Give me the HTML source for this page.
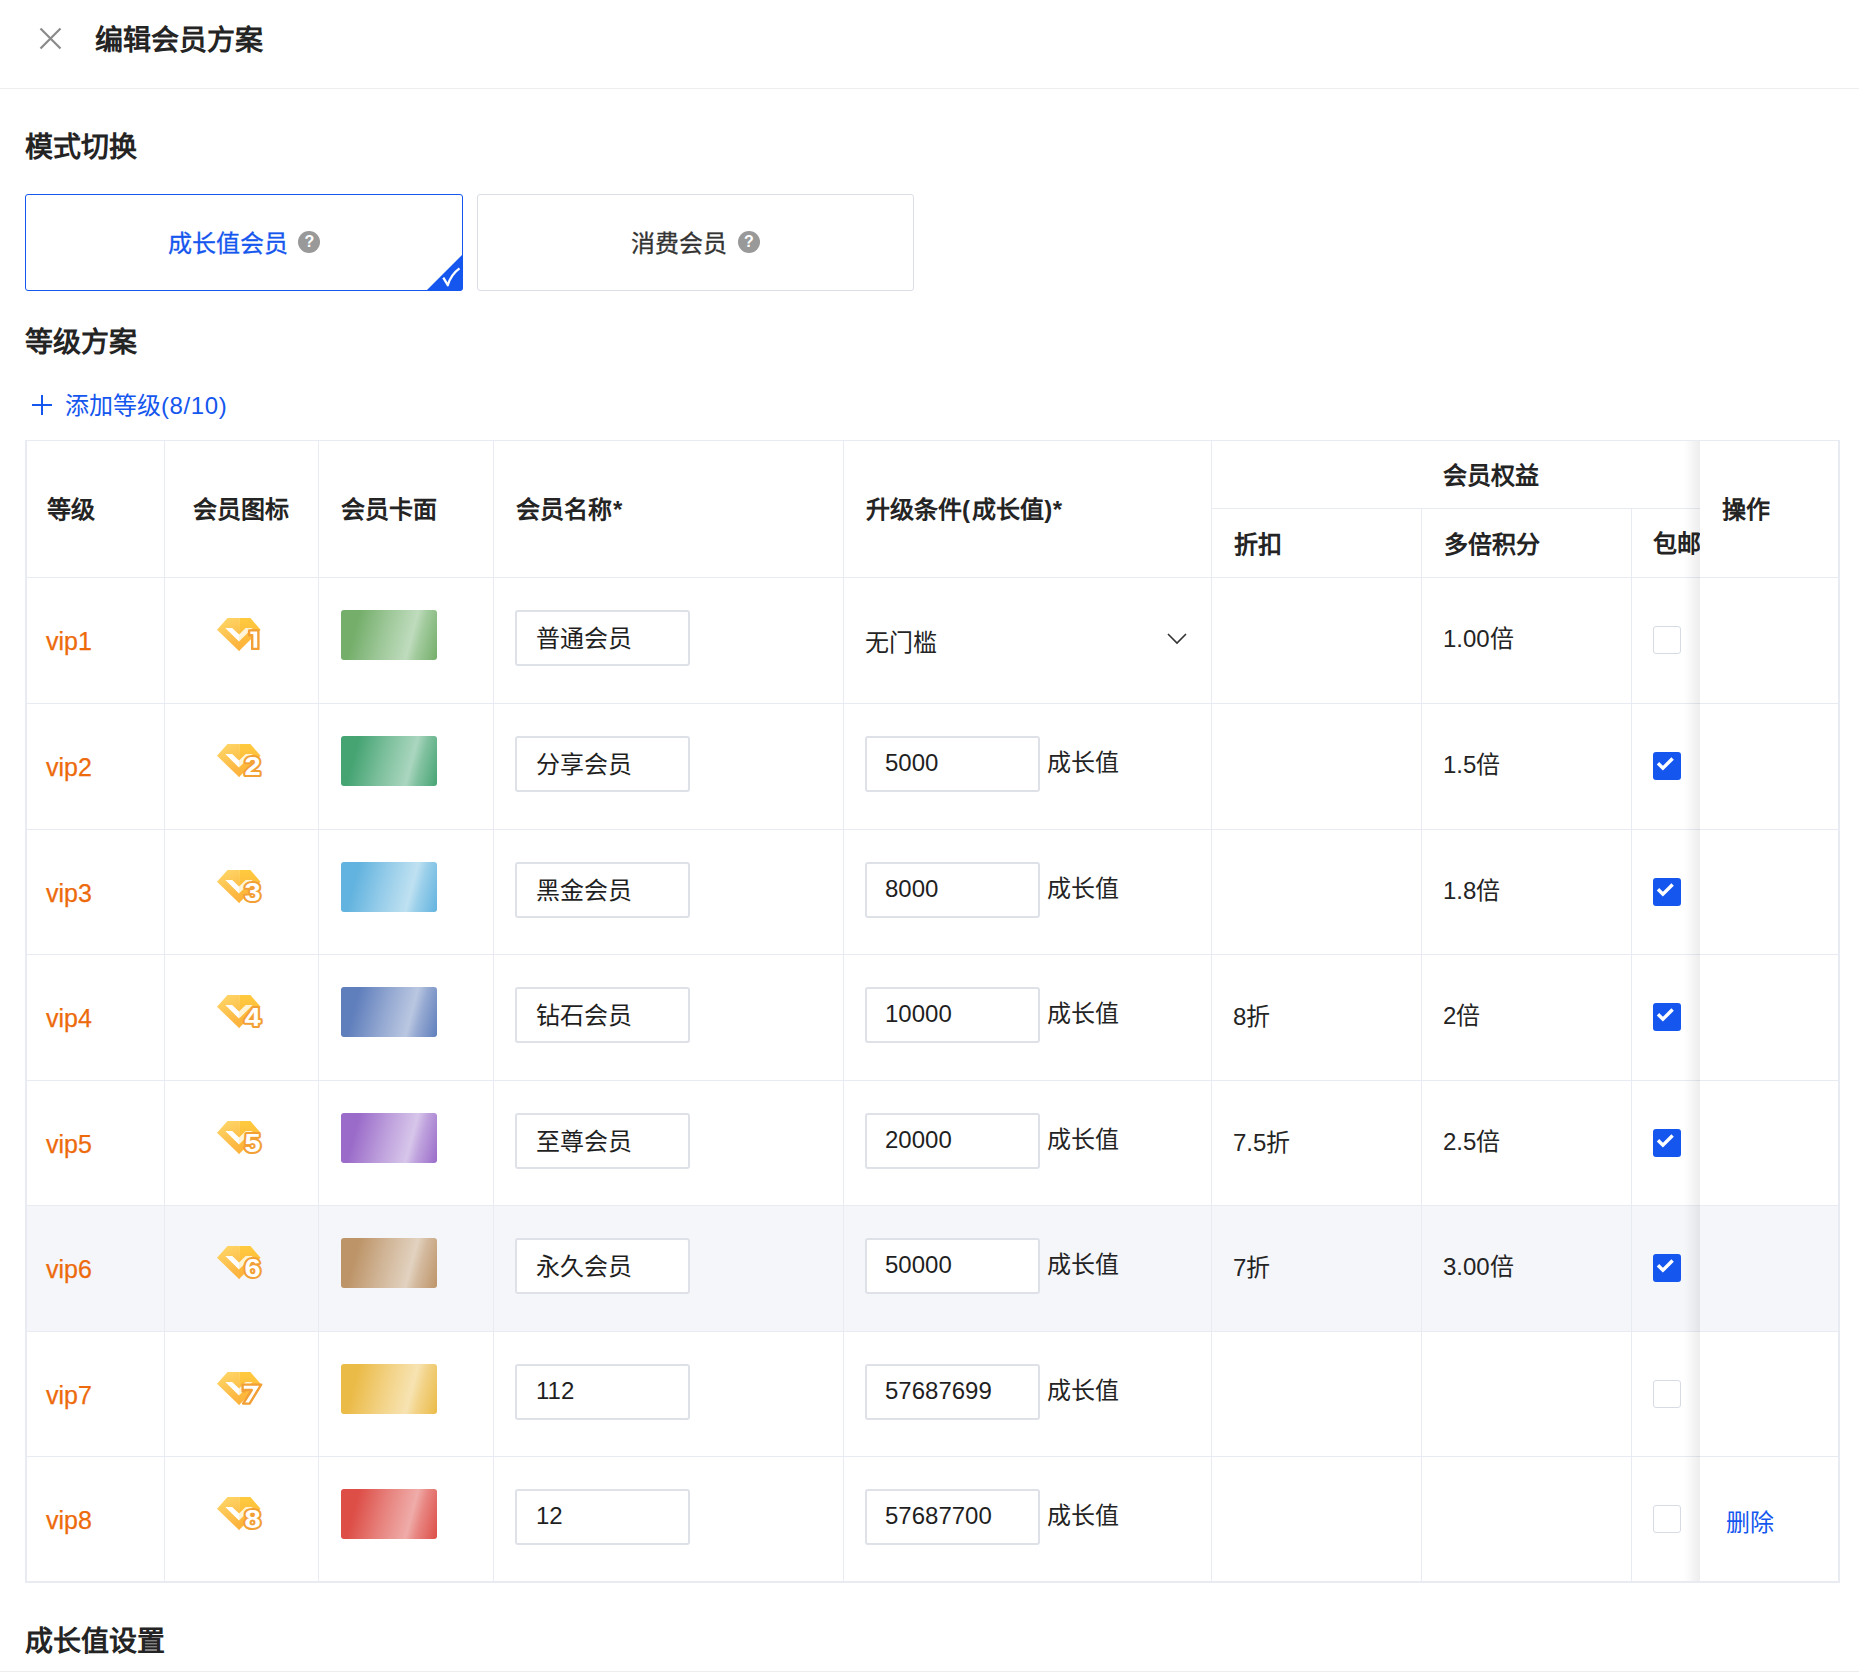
<!DOCTYPE html>
<html lang="zh-CN">
<head>
<meta charset="utf-8">
<style>
*{box-sizing:border-box;margin:0;padding:0}
html,body{width:1859px;height:1677px;overflow:hidden;background:#fff}
body{position:relative;font-family:"Liberation Sans",sans-serif;color:#323233}
.a{position:absolute;white-space:nowrap}
.h{font-size:28px;font-weight:bold;line-height:40px;color:#242424}
.th{font-size:24px;font-weight:bold;line-height:34px;color:#242424}
.td{font-size:24px;line-height:34px;color:#242424}
.vl{position:absolute;width:1px;background:#e8ebf2}
.hl{position:absolute;height:1px;background:#e8ebf2}
.card{position:absolute;top:194px;height:97px;border:1px solid #dcdee6;border-radius:3px;background:#fff}
.q{display:inline-block;width:22px;height:22px;border-radius:50%;background:#999;color:#fff;font-size:16px;font-weight:bold;line-height:22px;text-align:center;vertical-align:middle;margin-left:4px;position:relative;top:-4px;-webkit-text-stroke:0}
.inp{position:absolute;width:175px;height:56px;border:2px solid #dfe1e8;border-radius:3px;background:#fff;font-size:24px;line-height:52px;padding-left:19px;color:#1f1f1f}
.cb{position:absolute;left:1653px;width:28px;height:28px;border-radius:3px}
.cb0{border:1px solid #d6dbe4;background:#fff}
.cb1{background:#1557ee}
.vip{position:absolute;left:46px;font-size:25px;line-height:34px;color:#ed6a0c;-webkit-text-stroke:0.25px #ed6a0c}
.face{position:absolute;left:341px;width:96px;height:50px;border-radius:3px}
</style>
</head>
<body>
<!-- header -->
<svg class="a" style="left:39px;top:27px" width="23" height="23" viewBox="0 0 23 23"><path d="M1.5 1.5L21.5 21.5M21.5 1.5L1.5 21.5" stroke="#8a8a8a" stroke-width="2.2" fill="none"/></svg>
<div class="a h" style="left:95px;top:21px">编辑会员方案</div>
<div class="hl" style="left:0;top:88px;width:1859px;background:#eeeeee"></div>

<div class="a h" style="left:25px;top:128px">模式切换</div>

<div class="card" style="left:25px;width:438px;border-color:#1557ee">
  <div class="a" style="left:0;right:0;top:31px;text-align:center;font-size:24px;line-height:36px;color:#1557ee;-webkit-text-stroke:0.3px #1557ee">成长值会员 <span class="q">?</span></div>
  <svg class="a" style="right:-1px;bottom:-1px" width="37" height="37" viewBox="0 0 37 37"><path d="M37 0V33Q37 37 33 37H0Z" fill="#1557ee"/><path d="M17.3 23.6L21.8 31.2Q25 20.5 33.5 14.4" stroke="#fff" stroke-width="2.3" fill="none" stroke-linejoin="round"/></svg>
</div>
<div class="card" style="left:477px;width:437px">
  <div class="a" style="left:0;right:0;top:31px;text-align:center;font-size:24px;line-height:36px;color:#333;-webkit-text-stroke:0.3px #333">消费会员 <span class="q">?</span></div>
</div>

<div class="a h" style="left:25px;top:323px">等级方案</div>
<svg class="a" style="left:32px;top:395px" width="20" height="20" viewBox="0 0 20 20"><path d="M10 0V20M0 10H20" stroke="#1557ee" stroke-width="2" fill="none"/></svg>
<div class="a" style="left:65px;top:388.5px;font-size:24px;line-height:34px;color:#1557ee">添加等级<span style="letter-spacing:0.6px">(8/10)</span></div>

<!-- TABLE -->
<svg width="0" height="0" style="position:absolute"><defs><linearGradient id="gL" x1="0" y1="0" x2="0.3" y2="1"><stop offset="0" stop-color="#fed96b"/><stop offset="1" stop-color="#fdb53f"/></linearGradient><linearGradient id="gR" x1="0" y1="0" x2="0" y2="1"><stop offset="0" stop-color="#ffca3e"/><stop offset="1" stop-color="#fdb03c"/></linearGradient></defs></svg>
<div class="a" style="left:26px;top:1206px;width:1812px;height:125px;background:#f5f6fa"></div>
<div class="hl" style="left:25px;top:440px;width:1815px"></div>
<div class="vl" style="left:25px;top:440px;height:1143px;width:2px"></div>
<div class="hl" style="left:25px;top:1581px;width:1815px;height:2px"></div>
<div class="vl" style="left:1838px;top:440px;height:1143px;width:2px"></div>
<div class="vl" style="left:164px;top:440px;height:1142px"></div>
<div class="vl" style="left:318px;top:440px;height:1142px"></div>
<div class="vl" style="left:493px;top:440px;height:1142px"></div>
<div class="vl" style="left:843px;top:440px;height:1142px"></div>
<div class="vl" style="left:1211px;top:440px;height:1142px"></div>
<div class="vl" style="left:1421px;top:508px;height:1074px"></div>
<div class="vl" style="left:1631px;top:508px;height:1074px"></div>
<div class="hl" style="left:1211px;top:508px;width:489px"></div>
<div class="hl" style="left:25px;top:577px;width:1815px"></div>
<div class="hl" style="left:25px;top:703px;width:1815px"></div>
<div class="hl" style="left:25px;top:829px;width:1815px"></div>
<div class="hl" style="left:25px;top:954px;width:1815px"></div>
<div class="hl" style="left:25px;top:1080px;width:1815px"></div>
<div class="hl" style="left:25px;top:1205px;width:1815px"></div>
<div class="hl" style="left:25px;top:1331px;width:1815px"></div>
<div class="hl" style="left:25px;top:1456px;width:1815px"></div>
<div class="a th" style="left:47px;top:493px">等级</div>
<div class="a th" style="left:164px;width:154px;text-align:center;top:493px">会员图标</div>
<div class="a th" style="left:341px;top:493px">会员卡面</div>
<div class="a th" style="left:516px;top:493px">会员名称<span style="margin-left:1px">*</span></div>
<div class="a th" style="left:866px;top:493px">升级条件<span style="letter-spacing:2.2px">(</span>成长值<span style="letter-spacing:0.6px">)</span>*</div>
<div class="a th" style="left:1211px;width:560px;text-align:center;top:459px">会员权益</div>
<div class="a th" style="left:1234px;top:528px">折扣</div>
<div class="a th" style="left:1444px;top:528px">多倍积分</div>
<div class="a" style="left:1632px;top:508px;width:68px;height:69px;overflow:hidden"><div class="a th" style="left:21px;top:19px">包邮</div></div>
<div class="vip" style="top:624px">vip1</div>
<svg class="a" style="left:217px;top:617.5px" width="48" height="36" viewBox="0 0 48 36"><path d="M10.5 0H22.3V33.3L0 11.8Z" fill="url(#gL)"/><path d="M22.3 0H33.4L43.6 11.8L21.8 33.3Z" fill="url(#gR)"/><path d="M8.3 10H15.2L22 16.5V23.6Z" fill="#fff"/><path d="M22 16.5L28.7 10H35.6L22 23.6Z" fill="#fff4d8"/><path d="M32.1 12.4H41.4V30.9H35.2V17.3H32.1Z" fill="#fff" stroke="#f2a035" stroke-width="2.4" stroke-linejoin="round"/></svg>
<div class="face" style="top:610px;background:linear-gradient(105deg,#74ae6a 0%,#74ae6a 17%,#9dc798 45%,#bfdcbd 71%,#a1ca9c 80%,#74ae6a 100%)"></div>
<div class="inp" style="left:515px;top:610px"><span style="position:relative;top:1px">普通会员</span></div>
<div class="a td" style="left:865px;top:625.5px">无门槛</div>
<svg class="a" style="left:1167px;top:633px" width="20" height="12" viewBox="0 0 20 12"><path d="M1 1L10 10L19 1" stroke="#333" stroke-width="1.6" fill="none"/></svg>
<div class="a td" style="left:1443px;top:622px">1.00倍</div>
<div class="cb cb0" style="top:626px"></div>
<div class="vip" style="top:750px">vip2</div>
<svg class="a" style="left:217px;top:743.5px" width="48" height="36" viewBox="0 0 48 36"><path d="M10.5 0H22.3V33.3L0 11.8Z" fill="url(#gL)"/><path d="M22.3 0H33.4L43.6 11.8L21.8 33.3Z" fill="url(#gR)"/><path d="M8.3 10H15.2L22 16.5V23.6Z" fill="#fff"/><path d="M22 16.5L28.7 10H35.6L22 23.6Z" fill="#fff4d8"/><text transform="translate(35.7 31.3) scale(1.12 1)" x="0" y="0" text-anchor="middle" font-family="Liberation Sans" font-weight="bold" font-size="26" fill="#fff" stroke="#f2a035" stroke-width="4" paint-order="stroke" stroke-linejoin="round">2</text></svg>
<div class="face" style="top:736px;background:linear-gradient(105deg,#46a473 0%,#46a473 17%,#7dc09d 45%,#aad6bf 71%,#82c2a1 80%,#46a473 100%)"></div>
<div class="inp" style="left:515px;top:736px"><span style="position:relative;top:1px">分享会员</span></div>
<div class="inp" style="left:865px;top:736px;padding-left:18px"><span style="position:relative;top:-1.5px">5000</span></div>
<div class="a td" style="left:1047px;top:746px">成长值</div>
<div class="a td" style="left:1443px;top:748px">1.5倍</div>
<div class="cb cb1" style="top:752px"><svg class="a" style="left:0;top:0" width="28" height="28" viewBox="0 0 28 28"><path d="M5 11.3L9.9 16.2L19.6 6.5" stroke="#fff" stroke-width="3.4" fill="none"/></svg></div>
<div class="vip" style="top:876px">vip3</div>
<svg class="a" style="left:217px;top:869.5px" width="48" height="36" viewBox="0 0 48 36"><path d="M10.5 0H22.3V33.3L0 11.8Z" fill="url(#gL)"/><path d="M22.3 0H33.4L43.6 11.8L21.8 33.3Z" fill="url(#gR)"/><path d="M8.3 10H15.2L22 16.5V23.6Z" fill="#fff"/><path d="M22 16.5L28.7 10H35.6L22 23.6Z" fill="#fff4d8"/><text transform="translate(35.7 31.3) scale(1.12 1)" x="0" y="0" text-anchor="middle" font-family="Liberation Sans" font-weight="bold" font-size="26" fill="#fff" stroke="#f2a035" stroke-width="4" paint-order="stroke" stroke-linejoin="round">3</text></svg>
<div class="face" style="top:862px;background:linear-gradient(105deg,#62b3df 0%,#62b3df 17%,#95cce9 45%,#bfe1f1 71%,#9acfea 80%,#62b3df 100%)"></div>
<div class="inp" style="left:515px;top:862px"><span style="position:relative;top:1px">黑金会员</span></div>
<div class="inp" style="left:865px;top:862px;padding-left:18px"><span style="position:relative;top:-1.5px">8000</span></div>
<div class="a td" style="left:1047px;top:872px">成长值</div>
<div class="a td" style="left:1443px;top:874px">1.8倍</div>
<div class="cb cb1" style="top:878px"><svg class="a" style="left:0;top:0" width="28" height="28" viewBox="0 0 28 28"><path d="M5 11.3L9.9 16.2L19.6 6.5" stroke="#fff" stroke-width="3.4" fill="none"/></svg></div>
<div class="vip" style="top:1001px">vip4</div>
<svg class="a" style="left:217px;top:994.5px" width="48" height="36" viewBox="0 0 48 36"><path d="M10.5 0H22.3V33.3L0 11.8Z" fill="url(#gL)"/><path d="M22.3 0H33.4L43.6 11.8L21.8 33.3Z" fill="url(#gR)"/><path d="M8.3 10H15.2L22 16.5V23.6Z" fill="#fff"/><path d="M22 16.5L28.7 10H35.6L22 23.6Z" fill="#fff4d8"/><text transform="translate(35.7 31.3) scale(1.12 1)" x="0" y="0" text-anchor="middle" font-family="Liberation Sans" font-weight="bold" font-size="26" fill="#fff" stroke="#f2a035" stroke-width="4" paint-order="stroke" stroke-linejoin="round">4</text></svg>
<div class="face" style="top:987px;background:linear-gradient(105deg,#5f7ebc 0%,#5f7ebc 17%,#91a6d0 45%,#bac7e1 71%,#96aad2 80%,#5f7ebc 100%)"></div>
<div class="inp" style="left:515px;top:987px"><span style="position:relative;top:1px">钻石会员</span></div>
<div class="inp" style="left:865px;top:987px;padding-left:18px"><span style="position:relative;top:-1.5px">10000</span></div>
<div class="a td" style="left:1047px;top:997px">成长值</div>
<div class="a td" style="left:1233px;top:1000px">8折</div>
<div class="a td" style="left:1443px;top:999px">2倍</div>
<div class="cb cb1" style="top:1003px"><svg class="a" style="left:0;top:0" width="28" height="28" viewBox="0 0 28 28"><path d="M5 11.3L9.9 16.2L19.6 6.5" stroke="#fff" stroke-width="3.4" fill="none"/></svg></div>
<div class="vip" style="top:1127px">vip5</div>
<svg class="a" style="left:217px;top:1120.5px" width="48" height="36" viewBox="0 0 48 36"><path d="M10.5 0H22.3V33.3L0 11.8Z" fill="url(#gL)"/><path d="M22.3 0H33.4L43.6 11.8L21.8 33.3Z" fill="url(#gR)"/><path d="M8.3 10H15.2L22 16.5V23.6Z" fill="#fff"/><path d="M22 16.5L28.7 10H35.6L22 23.6Z" fill="#fff4d8"/><text transform="translate(35.7 31.3) scale(1.12 1)" x="0" y="0" text-anchor="middle" font-family="Liberation Sans" font-weight="bold" font-size="26" fill="#fff" stroke="#f2a035" stroke-width="4" paint-order="stroke" stroke-linejoin="round">5</text></svg>
<div class="face" style="top:1113px;background:linear-gradient(105deg,#9a6bc9 0%,#9a6bc9 17%,#bc9ddb 45%,#d7c6ea 71%,#bfa2dd 80%,#9a6bc9 100%)"></div>
<div class="inp" style="left:515px;top:1113px"><span style="position:relative;top:1px">至尊会员</span></div>
<div class="inp" style="left:865px;top:1113px;padding-left:18px"><span style="position:relative;top:-1.5px">20000</span></div>
<div class="a td" style="left:1047px;top:1123px">成长值</div>
<div class="a td" style="left:1233px;top:1126px">7.5折</div>
<div class="a td" style="left:1443px;top:1125px">2.5倍</div>
<div class="cb cb1" style="top:1129px"><svg class="a" style="left:0;top:0" width="28" height="28" viewBox="0 0 28 28"><path d="M5 11.3L9.9 16.2L19.6 6.5" stroke="#fff" stroke-width="3.4" fill="none"/></svg></div>
<div class="vip" style="top:1252px">vip6</div>
<svg class="a" style="left:217px;top:1245.5px" width="48" height="36" viewBox="0 0 48 36"><path d="M10.5 0H22.3V33.3L0 11.8Z" fill="url(#gL)"/><path d="M22.3 0H33.4L43.6 11.8L21.8 33.3Z" fill="url(#gR)"/><path d="M8.3 10H15.2L22 16.5V23.6Z" fill="#fff"/><path d="M22 16.5L28.7 10H35.6L22 23.6Z" fill="#fff4d8"/><text transform="translate(35.7 31.3) scale(1.12 1)" x="0" y="0" text-anchor="middle" font-family="Liberation Sans" font-weight="bold" font-size="26" fill="#fff" stroke="#f2a035" stroke-width="4" paint-order="stroke" stroke-linejoin="round">6</text></svg>
<div class="face" style="top:1238px;background:linear-gradient(105deg,#bd9468 0%,#bd9468 17%,#d1b698 45%,#e2d2c0 71%,#d3b99d 80%,#bd9468 100%)"></div>
<div class="inp" style="left:515px;top:1238px"><span style="position:relative;top:1px">永久会员</span></div>
<div class="inp" style="left:865px;top:1238px;padding-left:18px"><span style="position:relative;top:-1.5px">50000</span></div>
<div class="a td" style="left:1047px;top:1248px">成长值</div>
<div class="a td" style="left:1233px;top:1251px">7折</div>
<div class="a td" style="left:1443px;top:1250px">3.00倍</div>
<div class="cb cb1" style="top:1254px"><svg class="a" style="left:0;top:0" width="28" height="28" viewBox="0 0 28 28"><path d="M5 11.3L9.9 16.2L19.6 6.5" stroke="#fff" stroke-width="3.4" fill="none"/></svg></div>
<div class="vip" style="top:1378px">vip7</div>
<svg class="a" style="left:217px;top:1371.5px" width="48" height="36" viewBox="0 0 48 36"><path d="M10.5 0H22.3V33.3L0 11.8Z" fill="url(#gL)"/><path d="M22.3 0H33.4L43.6 11.8L21.8 33.3Z" fill="url(#gR)"/><path d="M8.3 10H15.2L22 16.5V23.6Z" fill="#fff"/><path d="M22 16.5L28.7 10H35.6L22 23.6Z" fill="#fff4d8"/><path d="M25.6 12.6H44.2L32.6 31.6H26.1L34.8 18H27.6V19.2H25.6Z" fill="#fff" stroke="#f2a035" stroke-width="2.4" stroke-linejoin="round"/></svg>
<div class="face" style="top:1364px;background:linear-gradient(105deg,#ebbb48 0%,#ebbb48 17%,#f2d182 45%,#f7e3b2 71%,#f2d388 80%,#ebbb48 100%)"></div>
<div class="inp" style="left:515px;top:1364px"><span style="position:relative;top:-1.5px">112</span></div>
<div class="inp" style="left:865px;top:1364px;padding-left:18px"><span style="position:relative;top:-1.5px">57687699</span></div>
<div class="a td" style="left:1047px;top:1374px">成长值</div>
<div class="cb cb0" style="top:1380px"></div>
<div class="vip" style="top:1503px">vip8</div>
<svg class="a" style="left:217px;top:1496.5px" width="48" height="36" viewBox="0 0 48 36"><path d="M10.5 0H22.3V33.3L0 11.8Z" fill="url(#gL)"/><path d="M22.3 0H33.4L43.6 11.8L21.8 33.3Z" fill="url(#gR)"/><path d="M8.3 10H15.2L22 16.5V23.6Z" fill="#fff"/><path d="M22 16.5L28.7 10H35.6L22 23.6Z" fill="#fff4d8"/><text transform="translate(35.7 31.3) scale(1.12 1)" x="0" y="0" text-anchor="middle" font-family="Liberation Sans" font-weight="bold" font-size="26" fill="#fff" stroke="#f2a035" stroke-width="4" paint-order="stroke" stroke-linejoin="round">8</text></svg>
<div class="face" style="top:1489px;background:linear-gradient(105deg,#dd4e47 0%,#dd4e47 17%,#e7827d 45%,#efaca9 71%,#e88682 80%,#dd4e47 100%)"></div>
<div class="inp" style="left:515px;top:1489px"><span style="position:relative;top:-1.5px">12</span></div>
<div class="inp" style="left:865px;top:1489px;padding-left:18px"><span style="position:relative;top:-1.5px">57687700</span></div>
<div class="a td" style="left:1047px;top:1499px">成长值</div>
<div class="cb cb0" style="top:1505px"></div>
<div class="a" style="left:1684px;top:441px;width:16px;height:1140px;background:linear-gradient(90deg,rgba(0,0,0,0),rgba(0,0,0,0.07))"></div>
<div class="a" style="left:1700px;top:441px;width:138px;height:1140px;background:#fff"></div>
<div class="a" style="left:1700px;top:1206px;width:138px;height:125px;background:#f5f6fa"></div>
<div class="hl" style="left:1700px;top:577px;width:138px"></div>
<div class="hl" style="left:1700px;top:703px;width:138px"></div>
<div class="hl" style="left:1700px;top:829px;width:138px"></div>
<div class="hl" style="left:1700px;top:954px;width:138px"></div>
<div class="hl" style="left:1700px;top:1080px;width:138px"></div>
<div class="hl" style="left:1700px;top:1205px;width:138px"></div>
<div class="hl" style="left:1700px;top:1331px;width:138px"></div>
<div class="hl" style="left:1700px;top:1456px;width:138px"></div>
<div class="a th" style="left:1722px;top:493px">操作</div>
<div class="a td" style="left:1726px;top:1506px;color:#1557ee">删除</div>
<!-- /TABLE -->

<div class="a h" style="left:25px;top:1622px">成长值设置</div>
<div class="hl" style="left:0;top:1671px;width:1859px;background:#eeeeee"></div>
</body>
</html>
